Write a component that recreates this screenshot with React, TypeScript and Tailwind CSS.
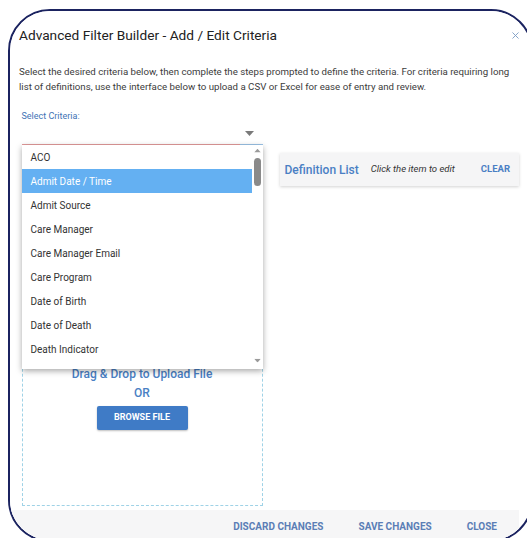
import { X } from "lucide-react";

const criteria = [
  "ACO",
  "Admit Date / Time",
  "Admit Source",
  "Care Manager",
  "Care Manager Email",
  "Care Program",
  "Date of Birth",
  "Date of Death",
  "Death Indicator",
  "Diagnosis Code",
];

function Caret({ className }: { className?: string }) {
  return (
    <svg width="9" height="5" viewBox="0 0 9 5" className={className}>
      <path d="M0 0h9L4.5 5z" fill="currentColor" />
    </svg>
  );
}

function CriteriaDropdown() {
  return (
    <div className="absolute left-0 top-0 w-full h-[224px] bg-white shadow-[0_2px_6px_rgba(0,0,0,0.35)] flex overflow-hidden z-10">
      <ul className="flex-1">
        {criteria.map((c) => (
          <li
            key={c}
            className={
              c === "Admit Date / Time"
                ? "h-6 flex items-center pl-[9px] text-[10px] text-white bg-[#64b0f2]"
                : "h-6 flex items-center pl-[9px] text-[10px] text-[#333]"
            }
          >
            {c}
          </li>
        ))}
      </ul>
      <div className="w-[11px] flex flex-col items-center bg-white">
        <Caret className="rotate-180 text-[#9a9a9a] mt-[3px] scale-75" />
        <div className="w-[7px] h-[28px] rounded-full bg-[#8a8a8a] mt-[5px]" />
        <div className="flex-1" />
        <Caret className="text-[#9a9a9a] mb-[6px] scale-75" />
      </div>
    </div>
  );
}

export default function App() {
  return (
    <div
      className="w-[527px] h-[538px] bg-white overflow-hidden pl-2 pt-[9px]"
      style={{ fontFamily: "Roboto, 'Liberation Sans', sans-serif" }}
    >
      <div className="w-[525px] h-[533px] rounded-[42px] border-[2.5px] border-[#1b2360] overflow-hidden">
        <div className="w-[509px] h-full flex flex-col bg-white">
          {/* header */}
          <div className="shrink-0 h-12 flex items-center justify-between pl-[9px] pr-0">
            <h2 className="text-[13.7px] text-[#222]">Advanced Filter Builder - Add / Edit Criteria</h2>
            <X size={11} strokeWidth={2} className="text-[#7d9cc4] mt-[1px] -mr-[2px]" />
          </div>

          <div className="shrink-0 mt-[5px] pl-[9px] text-[9.7px] leading-[15px] text-[#3c3c3c] whitespace-nowrap">
            <p>
              Select the desired criteria below, then complete the steps prompted to define the criteria. For criteria requiring long
            </p>
            <p>list of definitions, use the interface below to upload a CSV or Excel for ease of entry and review.</p>
          </div>

          {/* body */}
          <div className="flex-1 min-h-0 flex pl-[11.5px] gap-[17px]">
            <div className="w-[241px] flex flex-col">
              <div className="mt-[16px] text-[9px] leading-[12px] text-[#3f73b5]">Select Criteria:</div>
              <div className="shrink-0 h-[22px] flex items-center justify-end pr-[9px]">
                <Caret className="text-[#7a7a7a]" />
              </div>
              <div className="shrink-0 flex h-px">
                <div className="flex-1 bg-[#e39b9b]" />
                <div className="w-[23px] bg-[#9cc4e8]" />
              </div>
              <div className="relative flex-1 min-h-0">
                <CriteriaDropdown />
                <div className="h-full border border-t-0 border-dashed border-[#9fd2e6] flex flex-col items-center pt-[221px]">
                  <div className="text-[12px] leading-[16px] font-medium text-[#4a7fc4]">Drag &amp; Drop to Upload File</div>
                  <div className="mt-[3px] text-[12px] leading-[16px] font-medium text-[#4a7fc4]">OR</div>
                  <button className="mt-[5px] w-[91px] h-6 bg-[#3f7bc6] rounded-[2px] text-white text-[9px] font-bold shadow-[0_1px_2px_rgba(0,0,0,0.25)]">
                    BROWSE FILE
                  </button>
                </div>
              </div>
            </div>

            <div className="flex-1 pt-[59px]">
              <div className="h-[33px] bg-[#f5f5f6] shadow-[0_1px_3px_rgba(0,0,0,0.18)] flex items-center pl-[5px] pr-[9px]">
                <span className="text-[12px] font-medium text-[#4a7fc4]">Definition List</span>
                <span className="ml-[12px] text-[9.5px] italic text-[#333]">Click the item to edit</span>
                <span className="ml-auto text-[9.5px] font-bold text-[#4a7fc4]">CLEAR</span>
              </div>
            </div>
          </div>

          {/* footer */}
          <div className="shrink-0 mt-1 h-[30px] bg-[#f6f6f7] flex items-start justify-end pt-[9px] pr-[22px] gap-[35px] text-[10px] font-bold text-[#5b7eb6]">
            <span>DISCARD CHANGES</span>
            <span>SAVE CHANGES</span>
            <span>CLOSE</span>
          </div>
        </div>
      </div>
    </div>
  );
}
